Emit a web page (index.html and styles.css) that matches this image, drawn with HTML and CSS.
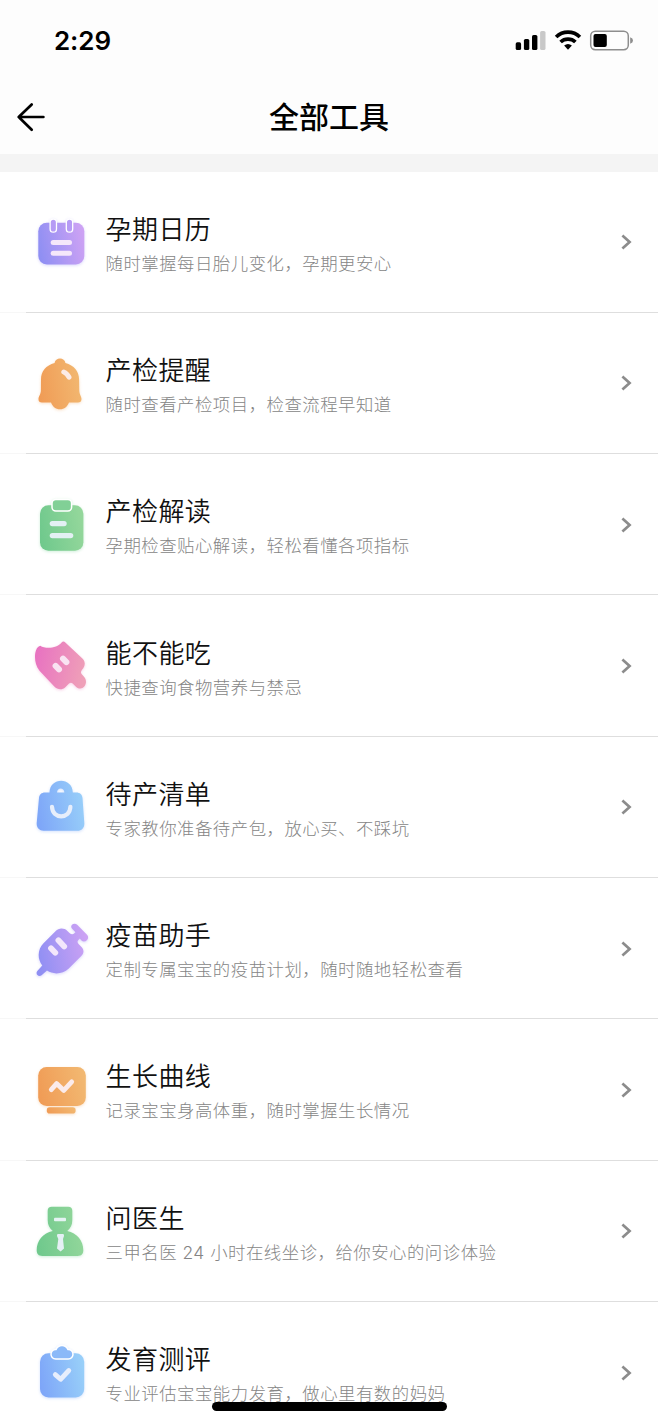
FILE: index.html
```html
<!DOCTYPE html>
<html lang="zh-CN">
  <head>
    <meta charset="UTF-8" />
    <meta name="viewport" content="width=device-width, initial-scale=1.0" />
    <title>全部工具</title>
    <link rel="stylesheet" href="styles.css">
  </head>
  <body>
    <!-- shared gradients and chevron -->
    <svg class="defs" width="0" height="0">
      <defs>
        <linearGradient id="purple" x1="0" y1="0.6" x2="1" y2="0.4">
          <stop offset="0" stop-color="#8f8ff3" />
          <stop offset="1" stop-color="#cda2f4" />
        </linearGradient>
        <linearGradient id="orange" x1="0" y1="0.6" x2="1" y2="0.4">
          <stop offset="0" stop-color="#f09c56" />
          <stop offset="1" stop-color="#f2b871" />
        </linearGradient>
        <linearGradient id="green" x1="0" y1="0.6" x2="1" y2="0.4">
          <stop offset="0" stop-color="#70c98d" />
          <stop offset="1" stop-color="#94d79b" />
        </linearGradient>
        <linearGradient id="pink" x1="0" y1="0.4" x2="1" y2="0.6">
          <stop offset="0" stop-color="#e873c1" />
          <stop offset="1" stop-color="#efa0b8" />
        </linearGradient>
        <linearGradient id="blue" x1="0" y1="0.6" x2="1" y2="0.4">
          <stop offset="0" stop-color="#7ea6f8" />
          <stop offset="1" stop-color="#98cff9" />
        </linearGradient>
        <symbol id="chevron" viewBox="0 0 12 18">
          <path d="M2.4 2.4 L9.6 9 L2.4 15.6" fill="none" stroke="#8c8c8c" stroke-width="2.7" />
        </symbol>
      </defs>
    </svg>

    <header class="header">
      <div class="status-bar">
        <span class="time">2:29</span>
        <svg class="status-icons" width="120" height="24" viewBox="0 0 120 24">
          <rect x="0.7" y="14.3" width="5.4" height="7.7" rx="1.6" />
          <rect x="8.9" y="11" width="5.4" height="11" rx="1.6" />
          <rect x="17" y="7" width="5.4" height="15" rx="1.6" />
          <rect x="25.1" y="3" width="5.4" height="19" rx="1.6" fill="#c8c8c8" />
          <g fill="none" stroke="#000" stroke-width="3.7">
            <path d="M41.1 9 A17.2 17.2 0 0 1 64.9 9" />
            <path d="M45.6 14 A10.7 10.7 0 0 1 60.4 14" />
          </g>
          <path d="M49.1 17.5 Q53 14.3 56.9 17.5 L53 21.7 Z" />
          <rect x="75.7" y="3.3" width="37.6" height="18.4" rx="4.6" fill="none" stroke="#8e8e8e" stroke-width="1.5" />
          <rect x="78.5" y="6" width="13.3" height="13" rx="2" />
          <path d="M115.2 9.3 Q118 10.2 118 12.5 Q118 14.8 115.2 15.7 Z" fill="#8e8e8e" />
        </svg>
      </div>
      <div class="nav-bar">
        <svg class="back" width="30" height="30" viewBox="0 0 30 30">
          <path d="M15.7 2.5 L2.7 15 L15.7 27.7 M2.7 15 H27.4" fill="none" stroke="#000" stroke-width="2.7" stroke-linecap="round" stroke-linejoin="round" />
        </svg>
        <h1>全部工具</h1>
      </div>
    </header>

    <main class="tool-list">
      <div class="tool">
        <svg class="icon purple" viewBox="0 0 60 60">
          <rect x="8.3" y="10.7" width="46" height="41.8" rx="8.5" fill="url(#purple)" />
          <g fill="#b69bf5" stroke="#fff" stroke-width="1.3">
            <rect x="20.1" y="7.2" width="6.4" height="13" rx="3.2" />
            <rect x="36.3" y="7.2" width="6.4" height="13" rx="3.2" />
          </g>
          <g fill="#f5e7fa">
            <rect x="20.7" y="28" width="21.3" height="5" rx="2.5" />
            <rect x="20.7" y="38.7" width="21.3" height="5" rx="2.5" />
          </g>
        </svg>
        <div class="text">
          <h2>孕期日历</h2>
          <p>随时掌握每日胎儿变化，孕期更安心</p>
        </div>
        <svg class="arrow"><use href="#chevron" /></svg>
      </div>

      <div class="tool">
        <svg class="icon orange" viewBox="0 0 60 60">
          <path d="M24.6 10 C25.2 4 34.8 4 35.4 10 C44 12.2 49 18.5 49.1 26.5 L49.3 37.5 C49.4 41.8 51.4 43 51.5 46 C51.5 48.5 50.2 49.4 48 49.4 H39 C37.3 53.5 34.4 56.2 30 56.2 C25.6 56.2 22.7 53.5 21 49.4 H12 C9.7 49.4 8.4 48.3 8.5 46 C8.6 43 10.8 41.5 10.9 37.5 L11 26.5 C11 18.5 16 12.2 24.6 10 Z" fill="url(#orange)" />
          <path d="M33.8 19 Q37 20.2 39 24.2" fill="none" stroke="#fcebe7" stroke-width="5" stroke-linecap="round" />
        </svg>
        <div class="text">
          <h2>产检提醒</h2>
          <p>随时查看产检项目，检查流程早知道</p>
        </div>
        <svg class="arrow"><use href="#chevron" /></svg>
      </div>

      <div class="tool">
        <svg class="icon green" viewBox="0 0 60 60">
          <rect x="10" y="10.2" width="43.4" height="45.6" rx="8.5" fill="url(#green)" />
          <rect x="22" y="4.4" width="19.6" height="11.6" rx="3.8" fill="#81d096" stroke="#fff" stroke-width="1.5" />
          <g fill="#e3f0f3">
            <rect x="19.7" y="26" width="17" height="5.2" rx="2.6" />
            <rect x="19.7" y="37.9" width="23.6" height="5.4" rx="2.7" />
          </g>
        </svg>
        <div class="text">
          <h2>产检解读</h2>
          <p>孕期检查贴心解读，轻松看懂各项指标</p>
        </div>
        <svg class="arrow"><use href="#chevron" /></svg>
      </div>

      <div class="tool">
        <svg class="icon pink" viewBox="0 0 60 60">
          <path d="M10.2 9.8 C16 13.5 27.5 12 31.6 6.6 C32.6 5.2 34 5.2 35.3 6.4 L52.4 22.4 C56 26 55 30.5 52.2 33.4 C50.8 35 50.4 36.8 51.8 38.2 L53.8 40.5 C59.5 46.5 53 56.5 46.2 51 L42.7 47.4 C41.5 46.3 40.2 46.4 39 47.6 L35.3 51.2 C32 54.2 27.7 53.8 24.3 50.5 L9.5 34.8 C5.5 30 4.5 23 5.2 17.5 C5.8 13.5 7.5 10.5 10.2 9.8 Z" fill="url(#pink)" />
          <g stroke="#f9e3f2" stroke-width="6" stroke-linecap="round">
            <path d="M25.6 29.9 L29 33.4" />
            <path d="M33 22.6 L36.4 26.1" />
          </g>
        </svg>
        <div class="text">
          <h2>能不能吃</h2>
          <p>快捷查询食物营养与禁忌</p>
        </div>
        <svg class="arrow"><use href="#chevron" /></svg>
      </div>

      <div class="tool">
        <svg class="icon blue" viewBox="0 0 60 60">
          <path fill-rule="evenodd" d="M19.5 15.5 C20 -0.2 42.3 -0.2 42.8 15.5 H46.3 C50 15.5 52.2 17.7 52.5 21 L54.3 46 C54.6 50.6 51.6 53.7 47.5 53.7 H13.5 C9.3 53.7 6.3 50.6 6.7 46 L9 21 C9.3 17.7 11.5 15.5 15 15.5 Z M27 15.5 H34.4 C34.2 10.2 27.2 10.2 27 15.5 Z" fill="url(#blue)" />
          <path d="M22 29.8 C22.4 42.5 40 42.5 40.4 29.8" fill="none" stroke="#e7eefb" stroke-width="4.2" stroke-linecap="round" />
        </svg>
        <div class="text">
          <h2>待产清单</h2>
          <p>专家教你准备待产包，放心买、不踩坑</p>
        </div>
        <svg class="arrow"><use href="#chevron" /></svg>
      </div>

      <div class="tool">
        <svg class="icon purple" viewBox="0 0 60 60">
          <path d="M25.5 12.2 C29 8.8 34 8.8 37.4 12 L39.5 14 C41.5 15.8 43 15.7 44.7 14 L45.5 13.2 L42.6 10.3 C38.5 6 44.5 3 47.2 5.7 L57 15.8 C60.5 19.5 55 24.5 51.5 21.5 L49.8 19.5 L48.4 20.9 C47 22.5 47.3 23.7 48.8 25.2 L51.5 28 C54.2 31 54 34 51.5 36.8 L38.5 49.8 C33 55 23.5 56 17 51.6 L11.6 56.2 C8.5 58.5 5 55 7.3 52 L12.3 46.5 C6.5 39 8.2 29.5 13.5 24.2 Z" fill="url(#purple)" />
          <g stroke="#f3e7fb" stroke-width="5.8" stroke-linecap="round">
            <path d="M21 29.3 L25.3 33.7" />
            <path d="M28.4 21.3 L34.2 27.4" />
          </g>
        </svg>
        <div class="text">
          <h2>疫苗助手</h2>
          <p>定制专属宝宝的疫苗计划，随时随地轻松查看</p>
        </div>
        <svg class="arrow"><use href="#chevron" /></svg>
      </div>

      <div class="tool">
        <svg class="icon orange" viewBox="0 0 60 60">
          <rect x="8.2" y="7" width="47.6" height="39" rx="8.5" fill="url(#orange)" />
          <rect x="16.8" y="47.2" width="28.8" height="6.3" rx="2.8" fill="url(#orange)" />
          <path d="M21.3 29.6 L26.6 23.6 L33.8 30.4 L41.7 21.8" fill="none" stroke="#fbebeb" stroke-width="4.8" stroke-linecap="round" stroke-linejoin="round" />
        </svg>
        <div class="text">
          <h2>生长曲线</h2>
          <p>记录宝宝身高体重，随时掌握生长情况</p>
        </div>
        <svg class="arrow"><use href="#chevron" /></svg>
      </div>

      <div class="tool">
        <svg class="icon green" viewBox="0 0 60 60">
          <path d="M21.8 5.7 H38.2 C40.8 5.7 42.3 7.2 42.3 9.8 V19 C42.3 24 40.6 27.3 37.2 30 C47 32 53.3 39.5 53.3 49.3 C53.3 53.2 51.2 55 47.7 55 H12.3 C8.8 55 6.7 53.2 6.7 49.3 C6.7 39.5 13 32 22.8 30 C19.4 27.3 17.7 24 17.7 19 V9.8 C17.7 7.2 19.2 5.7 21.8 5.7 Z" fill="url(#green)" />
          <rect x="24" y="16.7" width="12" height="3.6" rx="1" fill="#e5f3f3" />
          <path d="M28 33 H33 Q34.3 33.2 34 35 L33 38 L34 47.5 L30.6 50.5 L27 47.5 L28.3 38 L27 35 Q26.7 33.2 28 33 Z" fill="#e5f0f5" />
        </svg>
        <div class="text">
          <h2>问医生</h2>
          <p>三甲名医 24 小时在线坐诊，给你安心的问诊体验</p>
        </div>
        <svg class="arrow"><use href="#chevron" /></svg>
      </div>

      <div class="tool">
        <svg class="icon blue" viewBox="0 0 60 60">
          <rect x="10" y="10.2" width="44.2" height="44.4" rx="8.5" fill="url(#blue)" />
          <path d="M25.8 7.3 H26.5 C28.5 2 35.5 2 37.5 7.3 H38.2 C43.6 7.3 43.6 15.3 38.2 15.3 H25.8 C20.4 15.3 20.4 7.3 25.8 7.3 Z" fill="#8bb9f8" stroke="#fff" stroke-width="3" paint-order="stroke" />
          <path d="M25.3 31.6 L30.6 36.3 L38.8 27.5" fill="none" stroke="#e7eefc" stroke-width="4.8" stroke-linecap="round" stroke-linejoin="round" />
        </svg>
        <div class="text">
          <h2>发育测评</h2>
          <p>专业评估宝宝能力发育，做心里有数的妈妈</p>
        </div>
        <svg class="arrow"><use href="#chevron" /></svg>
      </div>
    </main>

    <div class="home-indicator"></div>
  </body>
</html>
```
FILE: styles.css
```css
* {
  box-sizing: border-box;
}
body {
  margin: 0;
  height: 1425px;
  overflow: hidden;
  position: relative;
  font-family: Inter, "Noto Sans CJK SC", sans-serif;
  background-color: #fff;
}
h1,
h2,
p {
  margin: 0;
}
.defs {
  position: absolute;
}
.header {
  height: 172px;
  background-color: #fdfdfd;
  border-bottom: 18px solid #f4f4f4;
}
.status-bar {
  display: flex;
  justify-content: space-between;
  align-items: center;
  height: 81px;
  padding: 0 23px 0 54px;
}
.time {
  font-size: 26px;
  font-weight: 600;
  letter-spacing: -0.1px;
}
.status-icons {
  margin-top: -2px;
}
.nav-bar {
  display: grid;
  grid-template-columns: 30px 1fr 30px;
  align-items: center;
  height: 71px;
  padding: 0 16px;
}
h1 {
  font-size: 30px;
  line-height: 40px;
  font-weight: 500;
  text-align: center;
}
.tool-list {
  margin-top: -0.5px;
}
.tool {
  display: flex;
  align-items: center;
  height: 141.3px;
  padding: 0 26px 0 30px;
  background: linear-gradient(#dedede, #dedede) 26px 100% / 100% 1px no-repeat,
    linear-gradient(#f7f7f7, #f7f7f7) 0 100% / 26px 1px no-repeat;
}
.icon {
  width: 60px;
  height: 60px;
  margin-right: 15.5px;
  overflow: visible;
}
.icon.purple {
  filter: drop-shadow(0 1px 1.5px rgba(150, 140, 245, 0.35));
}
.icon.orange {
  filter: drop-shadow(0 1px 1.5px rgba(242, 170, 100, 0.35));
}
.icon.green {
  filter: drop-shadow(0 1px 1.5px rgba(115, 205, 145, 0.35));
}
.icon.pink {
  filter: drop-shadow(0 1px 1.5px rgba(235, 125, 190, 0.35));
}
.icon.blue {
  filter: drop-shadow(0 1px 1.5px rgba(130, 170, 248, 0.35));
}
.text {
  flex: 1;
  padding-top: 6px;
}
h2 {
  font-size: 26px;
  line-height: 36px;
  letter-spacing: 0.45px;
  font-weight: 350;
  color: #111;
}
p {
  font-size: 17.4px;
  line-height: 31px;
  letter-spacing: 0.5px;
  font-weight: 300;
  color: #858585;
}
.arrow {
  width: 12px;
  height: 18px;
}
.home-indicator {
  position: absolute;
  left: 212px;
  top: 1402px;
  width: 235px;
  height: 9px;
  border-radius: 5px;
  background-color: #000;
}
```
